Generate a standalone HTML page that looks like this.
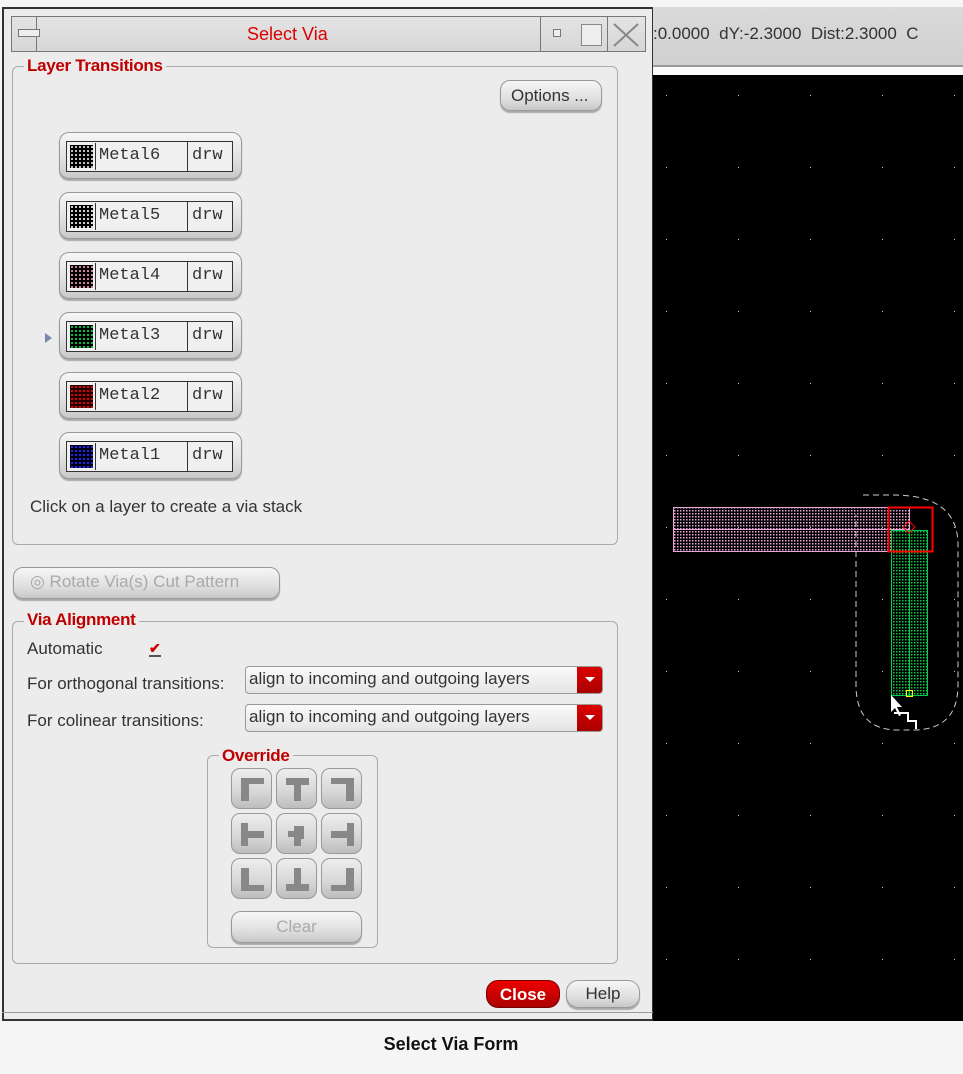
<!DOCTYPE html>
<html><head><meta charset="utf-8"><style>
*{box-sizing:border-box;margin:0;padding:0}
body{width:963px;height:1074px;background:#f5f5f5;position:relative;overflow:hidden;font-family:"Liberation Sans",sans-serif}
.a{position:absolute}
.dlg{left:2px;top:7px;width:651px;height:1014px;background:#ececec;border:2px solid #333;border-right:1px solid #333}
.grp{border:1px solid #aaa;border-radius:6px}
.leg{position:absolute;background:#ececec;color:#c00000;font-weight:bold;font-size:17px;padding:0 3px;letter-spacing:-0.3px}
.btn{background:linear-gradient(#f6f6f6,#e0e0e0 60%,#c8c8c8);border:1px solid #999;border-radius:10px;box-shadow:0 2px 1px #aaa}
.lb{position:absolute;left:59px;width:183px;height:47px}
.lb .in{position:absolute;left:6px;top:8px;width:167px;height:31px;border:1px solid #333;background:#f0f0f0;font-family:"Liberation Mono",monospace;font-size:17px;color:#333}
.lb .sw{position:absolute;left:1px;top:1px;width:28px;height:27px;border-right:1px solid #333}
.lb .sw div{position:absolute;left:2px;top:2px;width:23px;height:23px}
.lb .nm{position:absolute;left:32px;top:4px}
.lb .dw{position:absolute;left:120px;top:0;height:29px;border-left:1px solid #333;padding:4px 0 0 4px}
.t{position:absolute;font-size:17px;color:#333}
.dd{position:absolute;left:245px;width:358px;height:28px;border:1px solid #999;border-radius:4px;background:linear-gradient(#fafafa,#e4e4e4);font-size:17px;color:#333;padding:2px 0 0 3px}
.dd .r{position:absolute;right:0;top:0;width:25px;height:26px;background:linear-gradient(#d00,#a00);border-radius:0 3px 3px 0}
.dd .r:after{content:"";position:absolute;left:8px;top:10px;border-left:5px solid transparent;border-right:5px solid transparent;border-top:5px solid #fff}
.ob{position:absolute;width:41px;height:41px;border-radius:9px;background:linear-gradient(#eee,#d6d6d6 60%,#bdbdbd);border:1px solid #999}
.ob svg{position:absolute;left:7px;top:7px}
</style></head><body>
<div class="a" style="left:653px;top:7px;width:310px;height:60px;background:linear-gradient(#dadada,#d0d0d0);border-bottom:2px solid #999"></div>
<div class="a" style="left:653px;top:24px;font-size:17px;color:#333;white-space:nowrap">:0.0000&nbsp;&nbsp;dY:-2.3000&nbsp;&nbsp;Dist:2.3000&nbsp;&nbsp;C</div>
<div class="a" style="left:653px;top:67px;width:310px;height:8px;background:#fafafa"></div>
<div class="a" style="left:653px;top:75px;width:310px;height:946px;background:#000"></div>
<svg class="a" style="left:653px;top:75px" width="310" height="946">
<defs><pattern id="pk" width="3" height="3" patternUnits="userSpaceOnUse"><rect width="1.5" height="1.5" fill="#e8a6d8"/></pattern>
<pattern id="gr" width="3" height="3" patternUnits="userSpaceOnUse"><rect width="1.5" height="1.5" fill="#0c4"/></pattern>
<pattern id="dt" x="13" y="20" width="72" height="72" patternUnits="userSpaceOnUse"><rect width="1" height="1" fill="#bbb"/></pattern></defs>
<rect width="310" height="946" fill="url(#dt)"/>
<rect x="20.5" y="432.5" width="236" height="44" fill="url(#pk)" stroke="#e8a6d8"/>
<line x1="20" y1="454.5" x2="256" y2="454.5" stroke="#e8a6d8"/>
<rect x="238.5" y="455.5" width="36" height="165" fill="url(#gr)" stroke="#0c5"/>
<line x1="256.5" y1="455" x2="256.5" y2="620" stroke="#0c5"/>
<rect x="235.5" y="432.5" width="44" height="44" fill="none" stroke="#f00" stroke-width="2"/>
<path d="M256 446 l6 6 -6 6 -6 -6z" fill="none" stroke="#f00"/>
<rect x="253.5" y="615.5" width="6" height="6" fill="none" stroke="#ff0"/>
<path d="M210 420 H240 Q305 420 305 470 V610 Q305 655 260 655 H245 Q203 655 203 610 V440" fill="none" stroke="#ccc" stroke-dasharray="6,4"/>
<path d="M238 620 v17 l4 -4 4 8 2 -1 -4 -8 5 0z" fill="#fff"/>
<path d="M241 638 h14 v8 h8 v8" fill="none" stroke="#fff" stroke-width="2"/>
</svg>
<div class="a dlg"></div>
<div class="a" style="left:11px;top:16px;width:635px;height:36px;background:linear-gradient(#e4e4e4,#d6d6d6);border:1px solid #777"></div>
<div class="a" style="left:36px;top:16px;width:1px;height:36px;background:#777"></div>
<div class="a" style="left:18px;top:29px;width:22px;height:8px;border:1px solid #777;background:#eee"></div>
<div class="a" style="left:540px;top:16px;width:1px;height:36px;background:#777"></div>
<div class="a" style="left:607px;top:16px;width:1px;height:36px;background:#777"></div>
<div class="a" style="left:553px;top:29px;width:8px;height:8px;border:1px solid #777;background:#eee"></div>
<div class="a" style="left:581px;top:24px;width:21px;height:22px;border:1px solid #888;background:#eee"></div>
<svg class="a" style="left:612px;top:22px" width="28" height="26"><path d="M2 2L26 24M26 2L2 24" stroke="#888" stroke-width="2"/></svg>
<div class="a" style="left:247px;top:24px;color:#d00;font-size:18px">Select Via</div>

<div class="a grp" style="left:12px;top:66px;width:606px;height:479px"></div>
<div class="leg" style="left:24px;top:56px">Layer Transitions</div>
<div class="a btn" style="left:500px;top:80px;width:102px;height:31px;font-size:17px;color:#333;padding:5px 0 0 10px">Options ...</div>

<div class="lb btn" style="top:132px"><div class="in"><div class="sw"><div style="background:#000 radial-gradient(#ccc 35%,transparent 45%) 0 0/4px 4px"></div></div><span class="nm">Metal6</span><span class="dw">drw</span></div></div>
<div class="lb btn" style="top:192px"><div class="in"><div class="sw"><div style="background:#000 radial-gradient(#ddd 35%,transparent 45%) 0 0/4px 4px"></div></div><span class="nm">Metal5</span><span class="dw">drw</span></div></div>
<div class="lb btn" style="top:252px"><div class="in"><div class="sw"><div style="background:#000 radial-gradient(#d8a 35%,transparent 45%) 0 0/4px 4px"></div></div><span class="nm">Metal4</span><span class="dw">drw</span></div></div>
<div class="lb btn" style="top:312px"><div class="in"><div class="sw"><div style="background:#000 radial-gradient(#0c4 35%,transparent 45%) 0 0/4px 4px"></div></div><span class="nm">Metal3</span><span class="dw">drw</span></div></div>
<div class="lb btn" style="top:372px"><div class="in"><div class="sw"><div style="background:#200 radial-gradient(#e00 35%,transparent 45%) 0 0/4px 4px"></div></div><span class="nm">Metal2</span><span class="dw">drw</span></div></div>
<div class="lb btn" style="top:432px"><div class="in"><div class="sw"><div style="background:#001 radial-gradient(#22f 35%,transparent 45%) 0 0/4px 4px"></div></div><span class="nm">Metal1</span><span class="dw">drw</span></div></div>
<div class="a" style="left:45px;top:333px;border-top:5px solid transparent;border-bottom:5px solid transparent;border-left:7px solid #78a"></div>
<div class="t" style="left:30px;top:497px">Click on a layer to create a via stack</div>

<div class="a btn" style="left:13px;top:567px;width:267px;height:32px;font-size:17px;color:#aaa;padding:4px 0 0 16px">◎ Rotate Via(s) Cut Pattern</div>

<div class="a grp" style="left:12px;top:621px;width:606px;height:343px"></div>
<div class="leg" style="left:24px;top:610px">Via Alignment</div>
<div class="t" style="left:27px;top:639px">Automatic</div>
<div class="a" style="left:149px;top:642px;color:#c00;font-size:14px;font-weight:bold;border-bottom:2px solid #555;line-height:13px">✔</div>
<div class="t" style="left:27px;top:674px">For orthogonal transitions:</div>
<div class="t" style="left:27px;top:711px">For colinear transitions:</div>
<div class="dd" style="top:666px">align to incoming and outgoing layers<div class="r"></div></div>
<div class="dd" style="top:704px">align to incoming and outgoing layers<div class="r"></div></div>

<div class="a grp" style="left:207px;top:755px;width:171px;height:193px"></div>
<div class="leg" style="left:219px;top:746px">Override</div>
<div class="ob" style="left:231px;top:768px"><svg width="27" height="27" fill="#888"><path d="M2 2H25V8H10V25H2Z"/></svg></div>
<div class="ob" style="left:276px;top:768px"><svg width="27" height="27" fill="#888"><path d="M2 2H25V9H17V25H10V9H2Z"/></svg></div>
<div class="ob" style="left:321px;top:768px"><svg width="27" height="27" fill="#888"><path d="M2 2H25V25H17V8H2Z"/></svg></div>
<div class="ob" style="left:231px;top:813px"><svg width="27" height="27" fill="#888"><path d="M2 2H9V10H25V17H9V25H2Z"/></svg></div>
<div class="ob" style="left:276px;top:813px"><svg width="27" height="27" fill="#888"><path d="M10 5H20V18H17V25H10V16H4V10H10Z"/></svg></div>
<div class="ob" style="left:321px;top:813px"><svg width="27" height="27" fill="#888"><path d="M18 2H25V25H18V17H2V10H18Z"/></svg></div>
<div class="ob" style="left:231px;top:858px"><svg width="27" height="27" fill="#888"><path d="M2 2H10V19H25V25H2Z"/></svg></div>
<div class="ob" style="left:276px;top:858px"><svg width="27" height="27" fill="#888"><path d="M10 2H17V18H25V25H2V18H10Z"/></svg></div>
<div class="ob" style="left:321px;top:858px"><svg width="27" height="27" fill="#888"><path d="M17 2H25V25H2V19H17Z"/></svg></div>
<div class="a btn" style="left:231px;top:911px;width:131px;height:32px;font-size:17px;color:#aaa;text-align:center;padding-top:5px">Clear</div>

<div class="a" style="left:486px;top:980px;width:74px;height:28px;border-radius:12px;background:linear-gradient(#e00,#a00);border:1px solid #700;color:#fff;font-weight:bold;font-size:17px;text-align:center;padding-top:4px">Close</div>
<div class="a btn" style="left:566px;top:980px;width:74px;height:28px;font-size:17px;color:#333;text-align:center;padding-top:3px;border-radius:12px">Help</div>
<div class="a" style="left:2px;top:1012px;width:651px;height:1px;background:#999"></div>

<div class="a" style="left:0;top:1034px;width:902px;text-align:center;font-weight:bold;font-size:18px;color:#111">Select Via Form</div>
</body></html>
